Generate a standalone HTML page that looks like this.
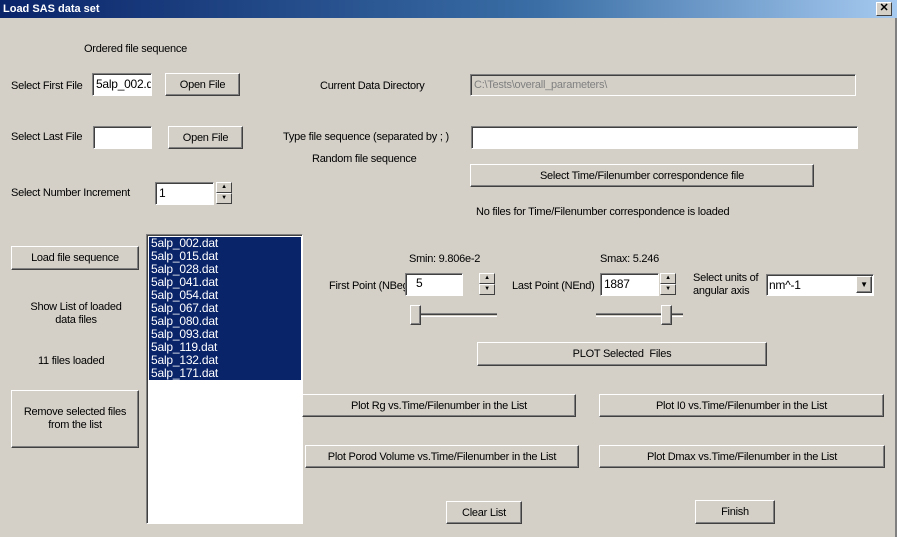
<!DOCTYPE html>
<html><head><meta charset="utf-8"><style>
*{box-sizing:border-box;margin:0;padding:0}
body{width:897px;height:537px;background:#d4d0c8;font-family:"Liberation Sans",sans-serif;font-size:11px;letter-spacing:-0.25px;color:#000;position:relative;overflow:hidden}
.a{position:absolute;white-space:nowrap}
.title{left:0;top:0;width:897px;height:18px;background:linear-gradient(90deg,#0a246a,#3a6ea5 60%,#a6caf0);color:#fff;font-weight:bold;font-size:11px;letter-spacing:0;line-height:18px;padding-left:3px}
.close{left:876px;top:2px;width:16px;height:14px;background:#d4d0c8;border:1px solid;border-color:#fff #404040 #404040 #fff;color:#000;font-size:11px;line-height:11px;text-align:center;font-weight:bold}
.btn{position:absolute;background:#d4d0c8;border:1px solid;border-color:#fff #404040 #404040 #fff;box-shadow:inset -1px -1px #808080;display:flex;align-items:center;justify-content:center;text-align:center;white-space:nowrap}
.tb{position:absolute;background:#fff;border:1px solid;border-color:#808080 #fff #fff #808080;box-shadow:inset 1px 1px #404040;padding:3px 3px;line-height:15px;white-space:nowrap;overflow:hidden;font-size:12px}
.sp{position:absolute;width:16px;height:11px;background:#d4d0c8;border:1px solid;border-color:#fff #404040 #404040 #fff;font-size:6px;line-height:9px;text-align:center}
.list{position:absolute;left:146px;top:234px;width:157px;height:290px;background:#fff;border:1px solid;border-color:#808080 #fff #fff #808080;box-shadow:inset 1px 1px #404040}
.sel{position:absolute;left:2px;top:2px;width:152px;background:#0a246a;color:#fff;padding-left:2px;line-height:13px;font-size:12px;letter-spacing:-0.2px}
.track{position:absolute;height:4px;border-top:1px solid #808080;border-bottom:1px solid #fff;background:#d4d0c8;box-shadow:inset 0 1px #404040}
.thumb{position:absolute;width:11px;height:20px;background:#d4d0c8;border:1px solid;border-color:#fff #404040 #404040 #fff;box-shadow:inset -1px -1px #808080}
</style></head><body>
<div class="a title">Load SAS data set</div>
<div class="a close">✕</div>
<div style="position:absolute;left:895px;top:18px;width:2px;height:519px;background:#808080"></div>

<div class="a" style="left:84px;top:43px">Ordered file sequence</div>
<div class="a" style="left:11px;top:80px">Select First File</div>
<div class="tb" style="left:92px;top:73px;width:60px;height:23px">5alp_002.d</div>
<div class="btn" style="left:165px;top:73px;width:75px;height:23px">Open File</div>
<div class="a" style="left:320px;top:80px">Current Data Directory</div>
<div class="tb" style="left:470px;top:74px;width:386px;height:22px;background:#d4d0c8;color:#808080;font-size:11px">C:\Tests\overall_parameters\</div>

<div class="a" style="left:11px;top:131px">Select Last File</div>
<div class="tb" style="left:93px;top:126px;width:59px;height:23px"></div>
<div class="btn" style="left:168px;top:126px;width:75px;height:23px">Open File</div>
<div class="a" style="left:283px;top:131px">Type file sequence (separated by ; )</div>
<div class="tb" style="left:471px;top:126px;width:387px;height:23px"></div>
<div class="a" style="left:312px;top:153px">Random file sequence</div>
<div class="btn" style="left:470px;top:164px;width:344px;height:23px">Select Time/Filenumber correspondence file</div>
<div class="a" style="left:476px;top:206px">No files for Time/Filenumber correspondence is loaded</div>

<div class="a" style="left:11px;top:187px">Select Number Increment</div>
<div class="tb" style="left:155px;top:182px;width:59px;height:23px">1</div>
<div class="sp" style="left:216px;top:182px">▲</div>
<div class="sp" style="left:216px;top:193px">▼</div>

<div class="btn" style="left:11px;top:246px;width:128px;height:24px">Load file sequence</div>
<div class="a" style="left:20px;top:301px;width:112px;text-align:center;line-height:13px">Show List of loaded<br>data files</div>
<div class="a" style="left:38px;top:355px">11 files loaded</div>
<div class="btn" style="left:11px;top:390px;width:128px;height:58px;line-height:13px">Remove selected files<br>from the list</div>

<div class="list"><div class="sel">5alp_002.dat<br>5alp_015.dat<br>5alp_028.dat<br>5alp_041.dat<br>5alp_054.dat<br>5alp_067.dat<br>5alp_080.dat<br>5alp_093.dat<br>5alp_119.dat<br>5alp_132.dat<br>5alp_171.dat</div></div>

<div class="a" style="left:409px;top:253px">Smin: 9.806e-2</div>
<div class="a" style="left:600px;top:253px">Smax: 5.246</div>
<div class="a" style="left:329px;top:280px">First Point (NBeg)</div>
<div class="tb" style="left:405px;top:273px;width:58px;height:23px;padding-left:10px;padding-top:2px">5</div>
<div class="sp" style="left:479px;top:273px">▲</div>
<div class="sp" style="left:479px;top:284px">▼</div>
<div class="track" style="left:411px;top:313px;width:86px"></div>
<div class="thumb" style="left:410px;top:305px"></div>
<div class="a" style="left:512px;top:280px">Last Point (NEnd)</div>
<div class="tb" style="left:600px;top:273px;width:59px;height:23px">1887</div>
<div class="sp" style="left:660px;top:273px">▲</div>
<div class="sp" style="left:660px;top:284px">▼</div>
<div class="track" style="left:596px;top:313px;width:87px"></div>
<div class="thumb" style="left:661px;top:305px"></div>
<div class="a" style="left:693px;top:272px;line-height:13px">Select units of<br>angular axis</div>
<div class="tb" style="left:766px;top:274px;width:108px;height:22px;padding:3px 2px">nm^-1</div>
<div class="btn" style="left:856px;top:276px;width:16px;height:17px;font-size:8px">▼</div>

<div class="btn" style="left:477px;top:342px;width:290px;height:24px">PLOT Selected&nbsp; Files</div>
<div class="btn" style="left:302px;top:394px;width:274px;height:23px">Plot Rg vs.Time/Filenumber in the List</div>
<div class="btn" style="left:599px;top:394px;width:285px;height:23px">Plot I0 vs.Time/Filenumber in the List</div>
<div class="btn" style="left:305px;top:445px;width:274px;height:23px">Plot Porod Volume vs.Time/Filenumber in the List</div>
<div class="btn" style="left:599px;top:445px;width:286px;height:23px">Plot Dmax vs.Time/Filenumber in the List</div>
<div class="btn" style="left:446px;top:501px;width:76px;height:23px">Clear List</div>
<div class="btn" style="left:695px;top:500px;width:80px;height:24px">Finish</div>
</body></html>
